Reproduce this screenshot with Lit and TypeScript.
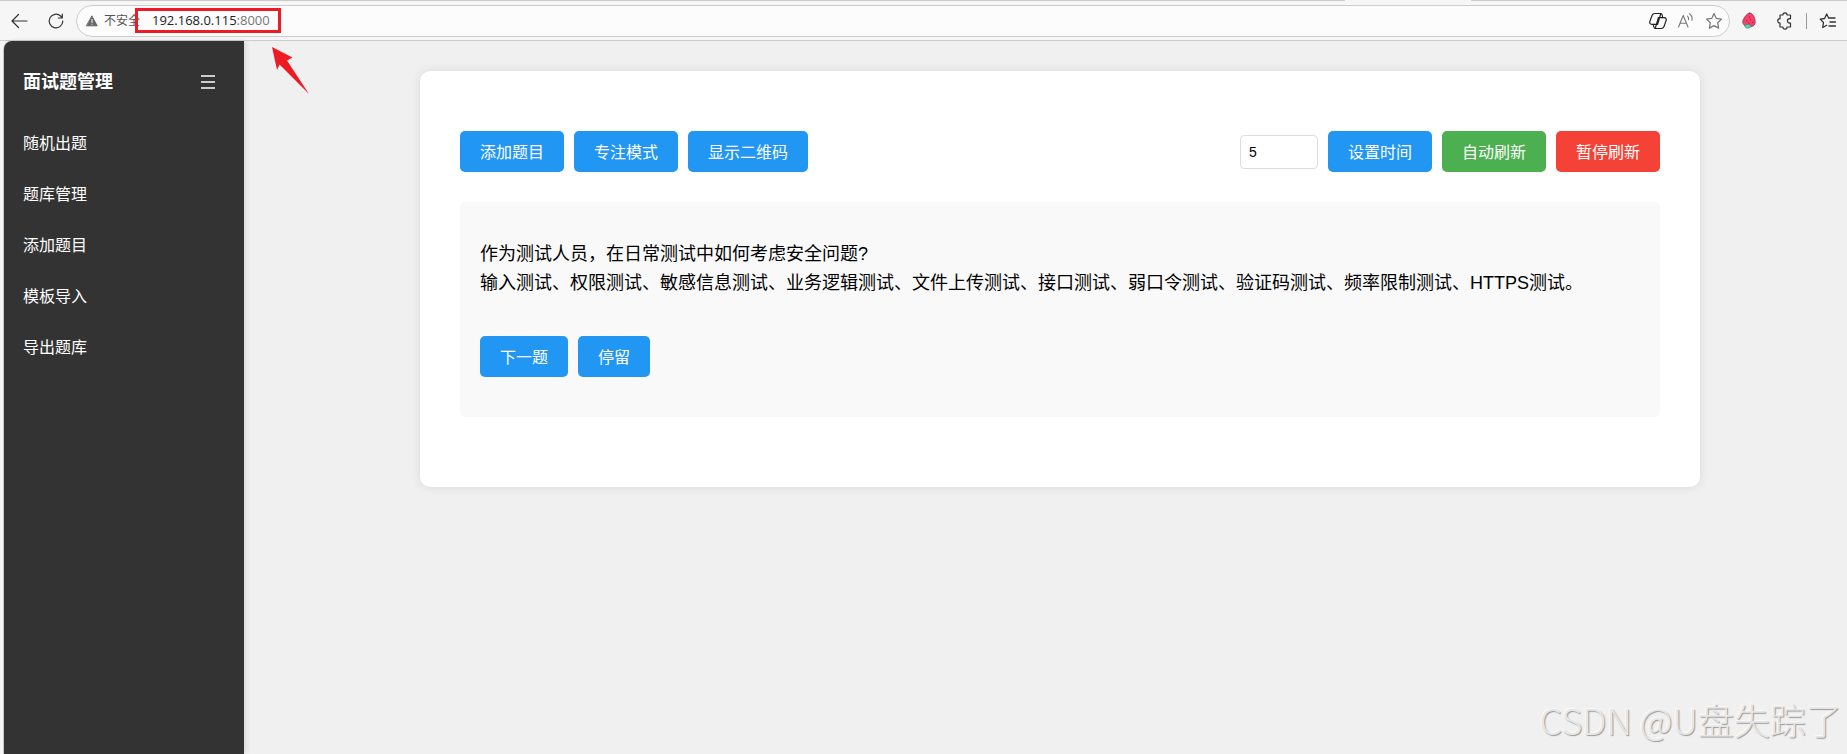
import { LitElement, html, css } from "lit";
import { customElement } from "lit/decorators.js";

@customElement("browser-bar")
export class BrowserBar extends LitElement {
  static styles = css`
    :host {
      display: block;
      font-family: "Open Sans", "Noto Sans CJK SC", sans-serif;
    }
    .tabs-edge {
      display: grid;
      grid-template-columns: 1fr 126px 376px;
      height: 1px;
    }
    .edge {
      background: #cbcbcb;
    }
    .bar {
      display: flex;
      align-items: center;
      box-sizing: border-box;
      height: 40px;
      padding: 4px 10px;
      border-bottom: 1px solid #cdcdcd;
      background: #f6f6f6;
    }
    button {
      display: grid;
      place-items: center;
      padding: 0;
      border: 0;
      background: none;
      color: #333;
      cursor: pointer;
    }
    svg {
      display: block;
      fill: none;
      stroke: currentColor;
      stroke-linecap: round;
      stroke-linejoin: round;
    }
    .back {
      margin-right: 19px;
    }
    .reload {
      margin-right: 11px;
    }
    .address {
      display: flex;
      flex: 1;
      align-items: center;
      box-sizing: border-box;
      height: 32px;
      padding: 0 6px 0 9px;
      border: 1px solid #cdcdcd;
      border-radius: 16px;
      background: #fcfcfc;
    }
    .security {
      flex: none;
      width: 39px;
      margin-left: 6px;
      color: #555;
      font-size: 12px;
      line-height: 16px;
      white-space: nowrap;
    }
    .field {
      position: relative;
      flex: 1;
      margin-left: 9px;
      line-height: 20px;
      padding-bottom: 2px;
    }
    .url {
      color: #222;
      font-size: 13px;
      text-decoration: none;
    }
    .port {
      color: #777;
    }
    .tools {
      display: flex;
      gap: 10px;
    }
    .tools button {
      width: 18px;
      color: #777;
    }
    .tools .dark {
      color: #222;
    }
    .extensions {
      display: flex;
      align-items: center;
      gap: 18px;
      margin-left: 12px;
    }
    .puzzle {
      margin-left: 2px;
    }
    .divider {
      width: 1px;
      height: 16px;
      margin: 0 -6px;
      background: #999;
    }
    .mark {
      position: absolute;
      top: -1px;
      left: -17px;
      box-sizing: border-box;
      width: 146px;
      height: 25px;
      border: 3px solid #ed1c24;
    }
    .arrow {
      position: absolute;
      top: 37px;
      left: 119px;
      fill: #ed1c24;
      stroke: none;
      z-index: 2;
    }
  `;

  render() {
    return html`
      <div class="tabs-edge"><i class="edge"></i><i></i><i class="edge"></i></div>
      <div class="bar">
        <button class="back" aria-label="返回">
          <svg width="18" height="18" viewBox="0 0 18 18" stroke-width="1.2">
            <path d="M17 9H2M8.500 2.500L2 9l6.500 6.500" />
          </svg>
        </button>
        <button class="reload" aria-label="刷新">
          <svg width="18" height="18" viewBox="0 0 18 18" stroke-width="1.2">
            <path d="M15.800 9a6.800 6.800 0 1 1-2.200-5L15.300 5.800M15.300 2v4h-4" />
          </svg>
        </button>
        <div class="address">
          <svg width="12" height="12" viewBox="0 0 12 12">
            <path d="M6 1.200L11.200 10.800H.8z" fill="#666" stroke="#666" />
            <path d="M6 4.500v3M6 9.200v.1" stroke="#fcfcfc" />
          </svg>
          <span class="security">不安全</span>
          <div class="field">
            <a class="url" href="#">192.168.0.115<span class="port">:8000</span></a>
            <span class="mark"></span>
            <svg class="arrow" width="40" height="50" viewBox="0 0 40 50">
              <path d="M1 1L21.500 11.500 16 14.500 38 48 8.500 18.500 6 24z" />
            </svg>
          </div>
          <div class="tools">
            <button class="dark" aria-label="Copilot">
              <svg width="18" height="18" viewBox="0 0 18 18" stroke-width="1.200">
                <path d="M5.800 1.500h6L8.600 12.300H2.800C1 12.300.4 11 .9 9.400L3 3.500C3.500 2.200 4.300 1.500 5.800 1.500zM12.200 16.500h-6L9.400 5.700h5.800c1.800 0 2.400 1.300 1.900 2.900L15 14.500c-.5 1.300-1.300 2-2.800 2z" />
                <path d="M11.800 1.500c1 0 1.300.9 1.500 2l.4 2.200M6.200 16.500c-1 0-1.300-.9-1.500-2l-.4-2.200" />
              </svg>
            </button>
            <button aria-label="朗读此页">
              <svg width="18" height="18" viewBox="0 0 18 18" stroke-width="1.100">
                <path d="M1.500 15L6.200 3.500 11 15M3.200 11.200h6M10.500 4.200c1 .9 1.300 2.200 1 3.500M12.500 1.800c2.400 1.700 3 4 2.400 6.500" />
              </svg>
            </button>
            <button aria-label="收藏">
              <svg width="18" height="18" viewBox="0 0 18 18" stroke-width="1.200">
                <path d="M9 1.500l2.300 4.900 5.200.7-3.800 3.700.9 5.300L9 13.600l-4.600 2.500.9-5.300L1.500 7.100l5.200-.7z" />
              </svg>
            </button>
          </div>
        </div>
        <div class="extensions">
          <button aria-label="草莓扩展">
            <svg width="14" height="17" viewBox="0 0 14 17">
              <path d="M7.500 1C4.500 1.500.8 7 .8 10c0 2.500 2 4.500 6 4.800s6.400-1.500 6.400-5S10.800.5 7.500 1z" fill="#fb3f6c" stroke="#7a3a48" stroke-width=".8" />
              <path d="M2.800 13.200c1.600-1 4.200-.9 6 .3-.2 1.700-1.400 2.700-3.300 2.700s-2.700-1.300-2.700-3z" fill="#4fd8b0" stroke="#3b8f78" stroke-width=".7" />
              <path d="M7.500 5v.3M4.800 8.500v.3M8.700 7.800v.3M7 11v.3M10.500 10.300v.3" stroke="#8a1f3c" />
            </svg>
          </button>
          <button class="puzzle" aria-label="扩展">
            <svg width="18" height="18" viewBox="0 0 18 18" stroke-width="1.200">
              <path d="M4 3h2.900a2.100 2.100 0 0 1 4.200 0H14.500V6.700h-.8a2.200 2.200 0 0 0 0 4.500h.8V15H11.100a2.100 2.100 0 0 1-4.200 0H4V11.200a2.200 2.200 0 0 1 0-4.500z" />
            </svg>
          </button>
          <span class="divider"></span>
          <button aria-label="收藏夹">
            <svg width="18" height="18" viewBox="0 0 18 18" stroke-width="1.300">
              <path d="M9.500 5.800L7.700 2 5.600 6.500 1.200 7.100l3.300 3.400-.8 5L7.700 13.200M9.500 6H16M11 10h5.500M10 14h6.500" />
            </svg>
          </button>
        </div>
      </div>
    `;
  }
}

@customElement("side-menu")
export class SideMenu extends LitElement {
  static styles = css`
    :host {
      display: block;
      box-sizing: border-box;
      width: 240px;
      padding: 20px 19px;
      border-top-left-radius: 8px;
      background: #333;
      box-shadow: 2px 0 5px rgba(0, 0, 0, 0.1);
      color: #fff;
    }
    header {
      display: flex;
      align-items: center;
      justify-content: space-between;
      height: 42px;
      margin-bottom: 15px;
    }
    h1 {
      margin: 0;
      font-size: 18px;
      line-height: 24px;
    }
    button {
      display: grid;
      place-items: center;
      width: 34px;
      height: 34px;
      padding: 0;
      border: 0;
      background: none;
      color: inherit;
      cursor: pointer;
    }
    svg {
      display: block;
      stroke: currentColor;
      stroke-width: 1.6;
    }
    ul {
      margin: 0;
      padding: 0;
      list-style: none;
    }
    a {
      display: block;
      padding: 15px 0;
      color: inherit;
      font-size: 16px;
      line-height: 21px;
      text-decoration: none;
    }
  `;

  private items = ["随机出题", "题库管理", "添加题目", "模板导入", "导出题库"];

  render() {
    return html`
      <header>
        <h1>面试题管理</h1>
        <button aria-label="菜单">
          <svg width="14" height="14" viewBox="0 0 14 14">
            <path d="M0 1h14M0 7h14M0 13h14" />
          </svg>
        </button>
      </header>
      <nav>
        <ul>
          ${this.items.map((item) => html`<li><a href="#">${item}</a></li>`)}
        </ul>
      </nav>
    `;
  }
}

@customElement("quiz-card")
export class QuizCard extends LitElement {
  static styles = css`
    :host {
      display: block;
      box-sizing: border-box;
      max-width: 1280px;
      margin: 0 auto;
      padding: 60px 40px 70px;
      border-radius: 10px;
      background: #fff;
      box-shadow: 0 0 10px rgba(0, 0, 0, 0.1);
    }
    .toolbar,
    .group {
      display: flex;
      align-items: center;
      gap: 10px;
    }
    .toolbar {
      flex-wrap: wrap;
      justify-content: space-between;
      margin-bottom: 30px;
    }
    button {
      padding: 11px 20px 9px;
      border: 0;
      border-radius: 5px;
      background: #2196f3;
      color: #fff;
      font-family: inherit;
      font-size: 16px;
      line-height: 21px;
      cursor: pointer;
    }
    .start {
      background: #4caf50;
    }
    .stop {
      background: #f44336;
    }
    input {
      box-sizing: border-box;
      width: 78px;
      height: 34px;
      padding: 8px;
      border: 1px solid #ddd;
      border-radius: 4px;
      font-family: inherit;
      font-size: 14px;
    }
    .question {
      padding: 38px 20px 40px;
      border-radius: 5px;
      background: #f9f9f9;
    }
    p {
      margin: 0;
      color: #000;
      font-size: 18px;
      line-height: 29px;
    }
    .answer {
      margin-bottom: 38px;
    }
  `;

  render() {
    return html`
      <div class="toolbar">
        <div class="group">
          <button>添加题目</button>
          <button>专注模式</button>
          <button>显示二维码</button>
        </div>
        <div class="group">
          <input type="number" value="5" min="1" aria-label="刷新时间" />
          <button>设置时间</button>
          <button class="start">自动刷新</button>
          <button class="stop">暂停刷新</button>
        </div>
      </div>
      <section class="question">
        <p>作为测试人员，在日常测试中如何考虑安全问题?</p>
        <p class="answer">
          输入测试、权限测试、敏感信息测试、业务逻辑测试、文件上传测试、接口测试、弱口令测试、验证码测试、频率限制测试、HTTPS测试。
        </p>
        <div class="group">
          <button>下一题</button>
          <button>停留</button>
        </div>
      </section>
    `;
  }
}

@customElement("app-root")
export class AppRoot extends LitElement {
  static styles = css`
    :host {
      position: relative;
      display: flex;
      flex-direction: column;
      min-height: 100vh;
      background: #f6f6f6;
      font-family: "Liberation Sans", "Noto Sans CJK SC", sans-serif;
    }
    .page {
      display: flex;
      flex: 1;
      margin-left: 3px;
      border-left: 1px solid #cdcdcd;
      border-top-left-radius: 9px;
      background: #f0f0f0;
    }
    side-menu {
      flex: none;
    }
    main {
      flex: 1;
      min-width: 0;
      padding: 30px 20px 30px 49px;
    }
    .watermark {
      position: absolute;
      right: 5px;
      bottom: 11px;
      color: #e6e6e6;
      font-family: "Noto Sans CJK SC", sans-serif;
      font-size: 36px;
      font-weight: 300;
      line-height: 48px;
      text-shadow: 1px 1px 1px #999, -1px -1px 1px #fafafa;
    }
  `;

  render() {
    return html`
      <browser-bar></browser-bar>
      <div class="page">
        <side-menu></side-menu>
        <main><quiz-card></quiz-card></main>
      </div>
      <span class="watermark">CSDN @U盘失踪了</span>
    `;
  }
}
